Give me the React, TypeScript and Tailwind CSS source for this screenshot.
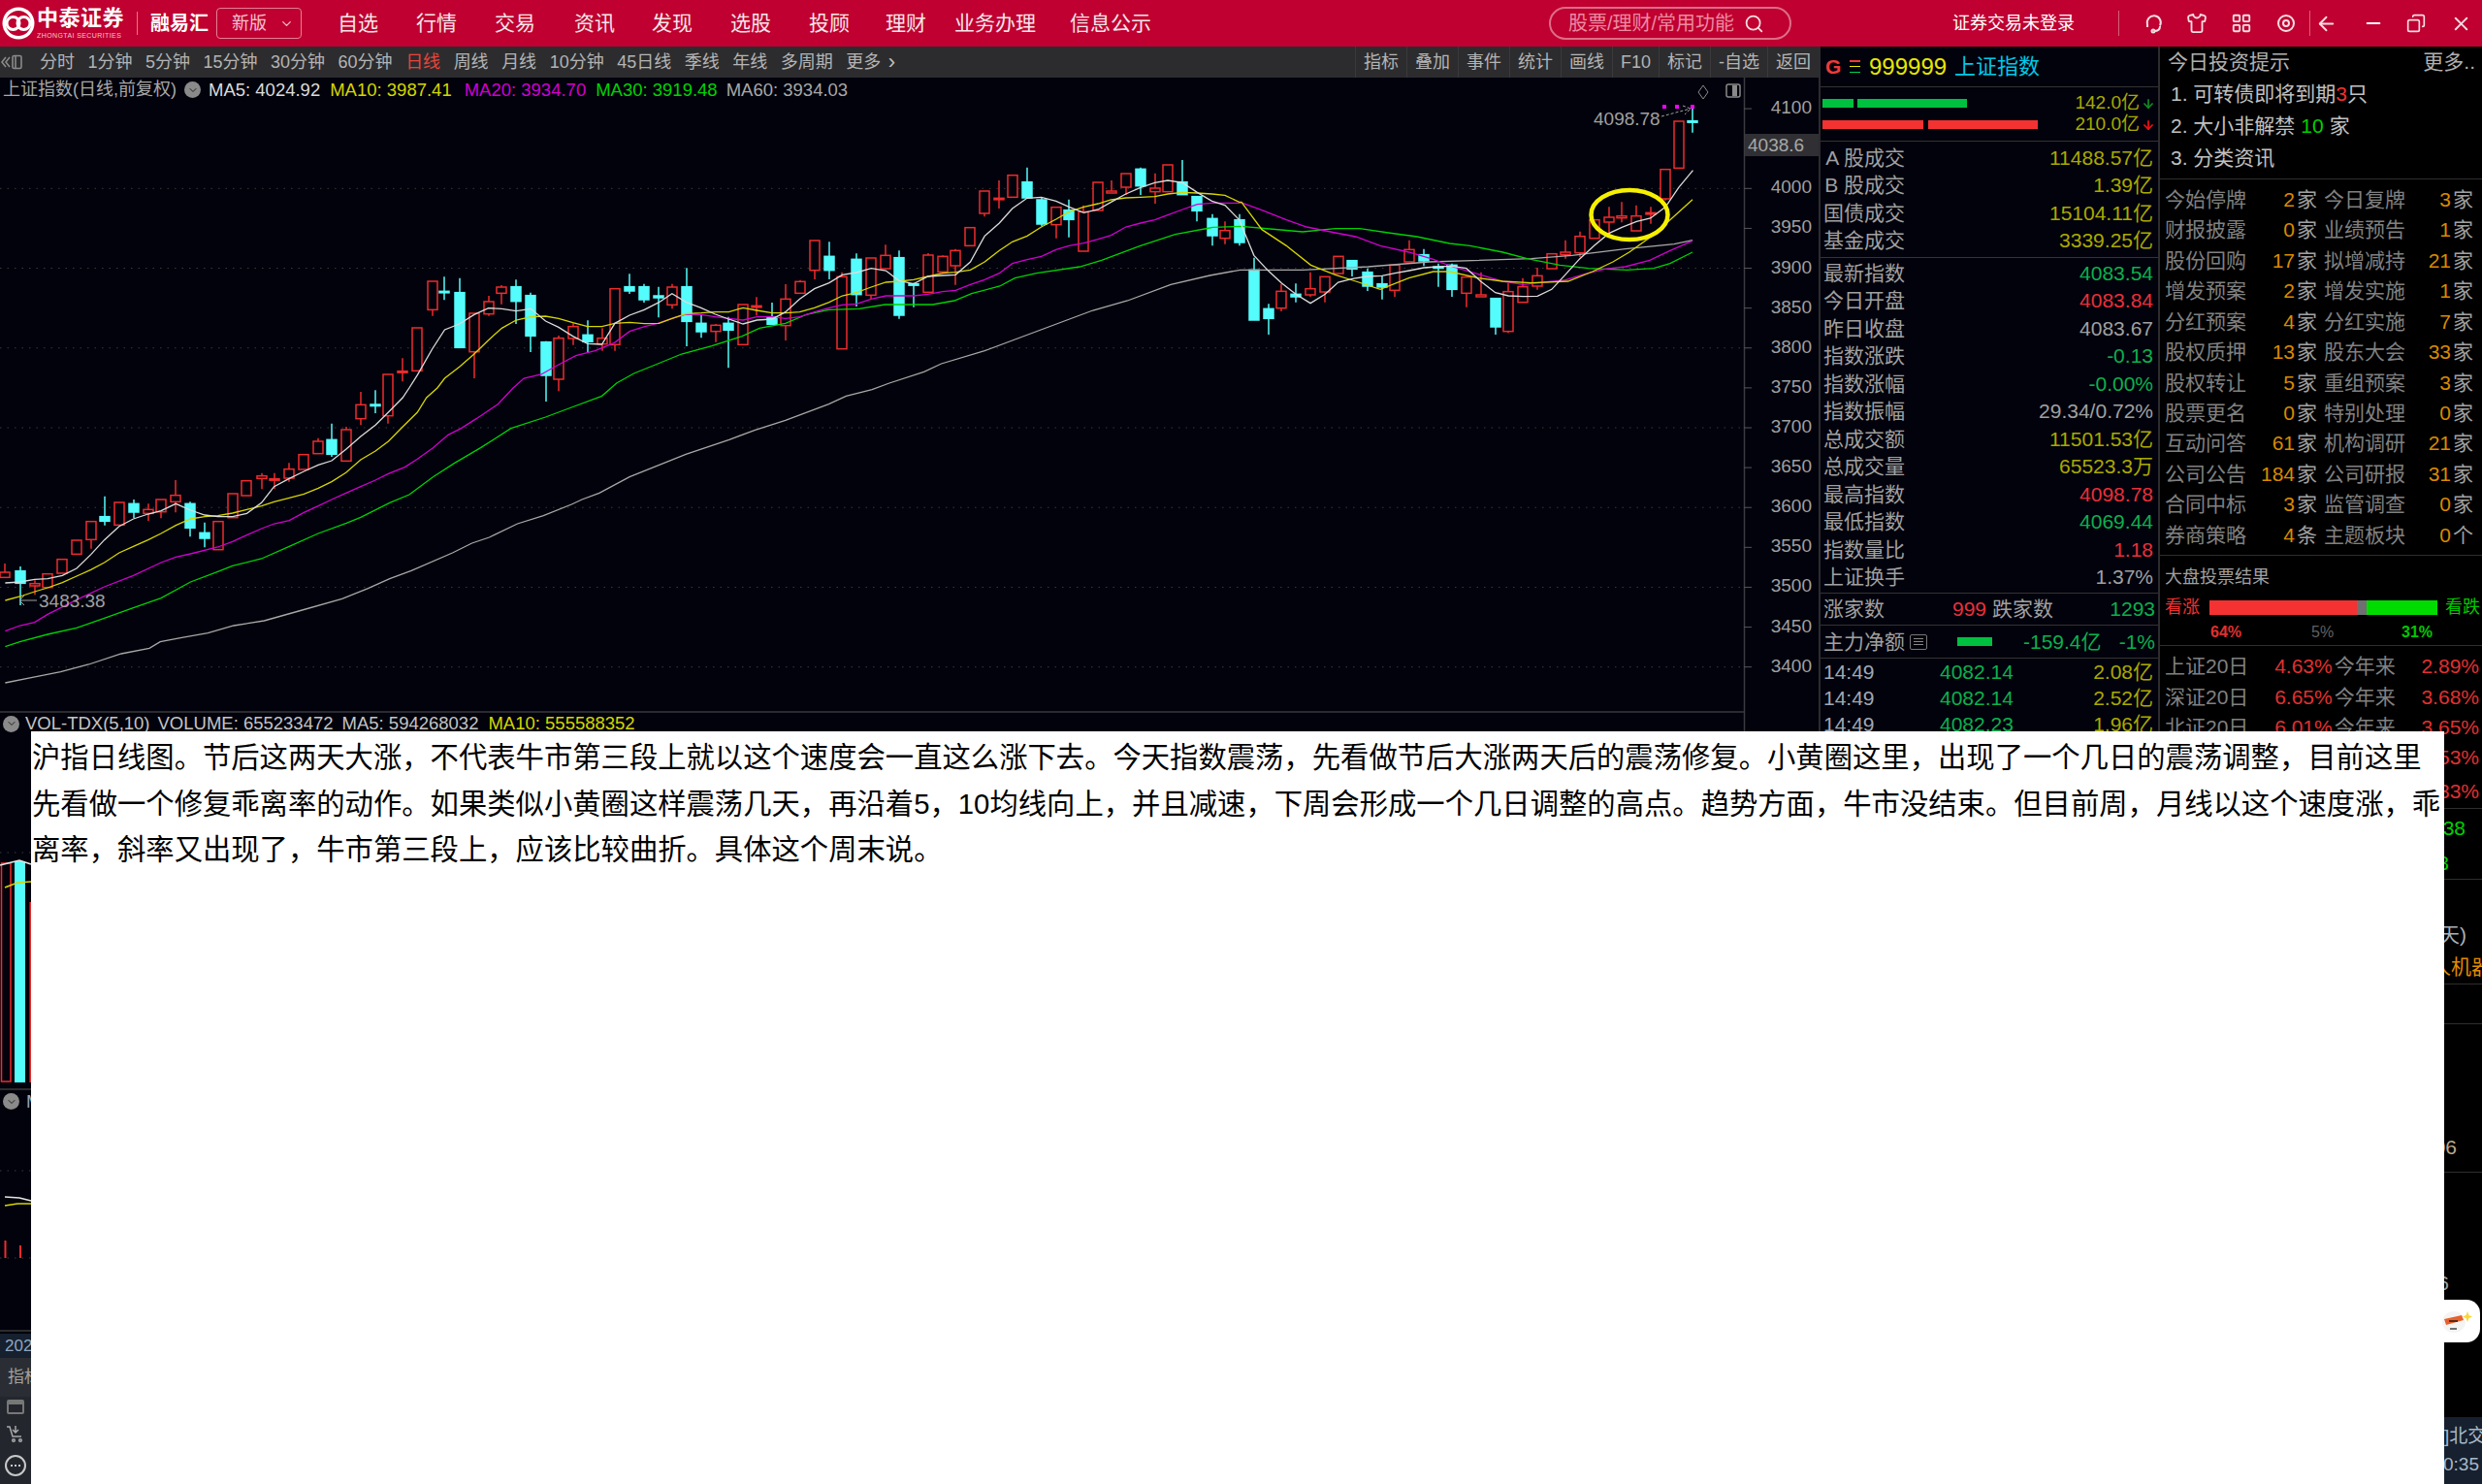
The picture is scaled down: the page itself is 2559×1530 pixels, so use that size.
import { ArrowDown, ArrowLeft, ChevronDown, Copy, LayoutGrid, Minus, Search, Shirt, X } from 'lucide-react'

type Pt = [number, number]

// 坐标都是从截图量出来的，分段抄的所以各段的换算不一样
const seg = (ox: number, oy: number, sx: number, nums: number[]): Pt[] => {
  const out: Pt[] = []
  for (let i = 0; i < nums.length; i += 2) out.push([ox + nums[i] / sx, oy + nums[i + 1] / 3])
  return out
}
const a = (n: number[]) => seg(0, 400, 2.24, n)
const b = (n: number[]) => seg(0, 130, 2.24, n)
const c = (n: number[]) => seg(600, 130, 2.24, n)
const d = (n: number[]) => seg(1200, 90, 2.376, n)

const MA5 = [
  ...a([12,603,46,600,80,592,110,590,144,580,177,558,210,515,241,470,275,428,308,405,342,390,372,380,406,358,440,378,473,393,503,398,537,398,570,388,604,355,633,305,668,280,702,258,735,238,766,225,799,190,833,150,867,115,897,75,930,30,945,0]),
  ...b([964,770,998,690,1027,630,1061,612,1095,583,1128,563,1159,565,1192,572,1226,565,1260,603,1290,622,1323,650,1357,673,1390,675,1420,610,1454,585,1488,568,1522,545,1552,518]),
  ...c([241,545,275,562,308,582,339,597,372,612,404,600,439,597,470,575,503,535,537,503,571,485,601,460,634,453,668,440,702,447,732,478,766,488,799,465,833,462,863,460,897,420,930,340,964,300,994,255,1028,223,1061,220,1095,232,1125,250,1159,268,1192,258,1222,235,1256,210,1290,190,1323,175,1353,168,1387,175,1421,205,1455,232,1485,245,1518,290,1552,400]),
  ...d([256,568,288,605,323,640,359,668,395,640,427,603,462,592,498,585,534,583,566,575,601,567,637,558,672,555,705,553,741,560,776,600,812,635,844,645,880,647,915,646,950,625,983,580,1019,530,1054,490,1090,452,1122,433,1158,415,1192,405,1229,370,1261,310,1296,257]),
]
const MA10 = [
  ...a([12,657,46,645,80,630,110,618,144,602,177,582,210,562,241,540,275,510,308,490,342,470,372,450,406,425,440,405,473,398,503,395,537,387,570,376,604,365,633,352,668,340,702,328,735,310,766,290,799,262,833,222,867,195,897,165,930,120,964,75,985,30,1010,0]),
  ...b([1027,780,1061,745,1095,705,1128,662,1159,625,1192,600,1226,590,1260,588,1290,595,1323,608,1357,620,1390,620,1420,610,1454,607,1488,611,1522,610,1552,595]),
  ...c([241,580,275,578,308,575,339,575,372,562,404,570,439,578,470,578,503,575,537,562,571,545,601,525,634,515,668,498,702,483,732,480,766,475,799,465,833,455,863,452,897,445,930,420,964,385,994,358,1028,340,1061,312,1095,288,1125,265,1159,250,1192,240,1222,228,1256,222,1290,220,1323,218,1353,210,1387,205,1421,207,1455,210,1485,214,1518,235]),
  ...d([190,355,240,440,300,490,360,550,420,580,470,600,530,625,600,590,660,570,700,570,770,590,830,600,900,605,990,600,1050,570,1100,540,1140,510,1190,465,1240,410,1295,347]),
]
const MA20 = [
  ...a([12,752,46,735,80,725,110,700,177,655,241,615,308,580,372,540,406,523,440,513,503,492,537,475,570,455,604,435,633,420,668,410,702,385,735,365,766,345,799,325,833,305,867,285,897,265,935,245,964,220,1000,185,1035,145,1065,125,1100,95,1150,50,1185,0]),
  ...b([1210,780,1250,768,1290,738,1330,710]),
  ...c([30,695,75,670,110,635,145,620,175,610,208,595,241,582,275,583,308,590,339,595,372,600,404,590,439,590,470,595,503,590,537,575,571,562,601,553,634,550,668,535,702,525,732,525,766,525,799,520,833,512,863,508,897,490,930,475,964,455,994,425,1028,413,1061,403,1095,382,1125,370,1159,362,1192,350,1222,338,1256,312,1290,300,1323,290,1353,275,1387,258,1421,242,1455,238,1485,238,1518,238]),
  ...d([190,357,240,380,300,410,350,432,420,450,470,462,530,490,600,510,660,532,700,552,770,578,830,600,880,610,930,603,980,597,1030,578,1080,562,1130,555,1190,535,1240,505,1295,475]),
]
const MA30 = [
  ...a([12,800,46,785,110,762,177,742,241,712,308,680,372,650,440,600,503,568,537,550,604,528,668,490,735,450,800,418,833,400,900,355,945,330,1000,275,1050,232,1110,185,1180,125,1260,90,1320,60,1390,25]),
  ...c([80,795,120,765,170,738,230,705,300,680,370,650,410,625,470,610,520,582,570,568,640,565,700,552,810,552,860,540,900,518,965,495,1000,470,1050,455,1150,435,1200,415,1290,370,1370,335,1450,315]),
  ...d([120,433,190,430,260,438,340,447,420,437,480,437,550,450,620,462,700,483,750,490,830,510,890,530,970,550,1040,560,1135,565,1200,560,1240,545,1295,510]),
]
const MA60 = [
  ...a([12,912,75,895,140,878,205,855,280,822,345,805,370,785,420,772,480,758,540,735,610,720,690,690,790,652,850,620,900,590,950,565,1045,510,1090,480,1130,462,1195,420,1255,395,1320,360]),
  ...c([0,1155,40,1135,110,1085,240,1015,340,970,400,940,470,910,570,860,610,835,670,815,710,795,790,760,830,735,930,695,1000,660,1060,630,1120,600,1180,570,1260,540,1360,490,1450,462,1520,445,1570,445]),
  ...d([340,565,500,555,650,540,900,530,1000,520,1130,500,1250,485,1295,473]),
]

// [x, 上影, 实体上, 实体下, 下影, 1=阳 0=阴]
type Raw = [number, number, number, number, number, number]
const C_A: Raw[] = [[12,543,570,586,586,1],[46,552,566,604,672,0],[80,595,605,612,640,1],[110,575,575,617,617,1],[144,530,530,573,573,1],[177,471,471,514,514,1],[210,413,413,469,497,1],[241,335,398,412,425,0],[275,354,354,424,424,1],[308,345,358,384,402,0],[342,358,376,388,411,1],[372,345,345,383,403,1],[406,285,332,352,385,1],[440,352,358,433,460,0],[473,416,448,465,493,0],[503,413,413,500,500,1],[537,327,327,401,401,1],[570,287,287,333,333,1],[604,263,272,280,313,1],[633,263,281,285,312,1],[668,232,251,279,290,1],[702,206,206,252,252,1],[735,155,165,203,203,1],[766,110,160,205,213,0],[799,120,129,226,226,1]]
const C_B: Raw[] = [[833,822,862,905,925,1],[867,817,861,865,888,0],[897,768,768,896,920,1],[930,718,758,762,790,1],[964,624,624,757,757,1],[998,480,480,568,587,1],[1027,466,511,514,538,0],[1061,470,515,685,685,0],[1095,579,579,698,780,1],[1128,525,543,581,587,1],[1159,492,498,517,551,1],[1192,475,497,542,612,0],[1226,515,524,649,699,0],[1260,665,668,771,852,0],[1290,648,656,783,820,1],[1323,610,620,657,677,1],[1357,601,646,667,700,0],[1390,625,656,674,695,1],[1420,503,503,676,695,1],[1454,457,497,510,519,0],[1488,488,497,537,546,0],[1522,497,525,531,592,0],[1552,488,498,553,565,1]]
const C_C: Raw[] = [[241,439,497,604,681,0],[275,585,610,636,655,0],[308,612,616,635,668,1],[339,590,610,631,748,0],[372,552,552,676,676,1],[404,529,556,560,586,1],[439,546,590,613,613,0],[470,489,535,617,663,1],[503,476,481,517,517,1],[537,354,354,446,474,1],[571,358,403,446,474,0],[601,452,466,689,689,1],[634,394,412,521,558,0],[668,408,408,523,535,1],[702,367,400,441,441,1],[732,385,407,585,596,0],[766,485,488,490,560,0],[799,393,399,514,514,1],[833,400,403,451,451,1],[863,380,385,432,491,1],[897,314,314,370,370,1],[930,201,201,270,280,1],[964,168,223,227,255,1],[994,152,152,220,220,1],[1028,128,173,222,222,0],[1061,222,228,303,310,0],[1095,251,251,305,347,1],[1125,227,260,289,344,0],[1159,245,265,387,387,1],[1192,174,174,261,261,1],[1222,168,201,207,207,1],[1256,147,147,189,213,1],[1290,128,133,185,213,0],[1323,146,192,203,240,1],[1353,120,120,203,203,1],[1387,105,173,212,212,0],[1421,218,218,262,295,0],[1455,272,286,339,370,0],[1485,295,323,347,365,1],[1518,272,290,360,370,0],[1552,407,445,600,600,0]]
const C_D: Raw[] = [[256,670,685,715,765,0],[288,608,631,683,693,1],[323,607,640,648,665,0],[359,572,623,642,648,1],[395,586,586,633,665,1],[427,523,523,576,576,1],[462,536,536,562,585,0],[498,560,572,615,630,0],[534,585,608,618,656,0],[566,550,550,628,648,1],[601,473,502,540,540,1],[637,500,518,537,553,0],[672,545,555,558,617,0],[705,545,550,625,648,0],[741,587,587,637,680,1],[776,572,642,648,648,1],[812,653,653,741,765,0],[844,605,632,755,760,1],[880,590,617,665,665,1],[915,558,583,615,626,1],[950,515,515,561,561,1],[983,473,510,518,530,1],[1019,446,461,512,525,1],[1054,410,410,467,467,1],[1090,370,402,417,450,1],[1122,355,398,404,418,1],[1158,365,398,444,444,1],[1192,370,388,390,422,1],[1229,254,254,345,350,1],[1261,105,105,250,250,1],[1296,62,104,106,140,0]]

const conv = (list: Raw[], ox: number, oy: number, sx: number) =>
  list.map(([x, w1, t, bt, w2, up]) => ({
    x: Math.round(ox + x / sx),
    w1: oy + w1 / 3,
    t: oy + t / 3,
    b: oy + bt / 3,
    w2: oy + w2 / 3,
    up: up === 1,
  }))
const CANDLES = [...conv(C_A, 0, 400, 2.24), ...conv(C_B, 0, 130, 2.24), ...conv(C_C, 600, 130, 2.24), ...conv(C_D, 1200, 90, 2.376)]

const priceY = (v: number) => 194.3 + (4000 - v) * 0.8223
const AXIS = [4100, 4000, 3950, 3900, 3850, 3800, 3750, 3700, 3650, 3600, 3550, 3500, 3450, 3400]
const GRID = [4000, 3900, 3800, 3700, 3600, 3500, 3400]

const LINES: { pts: Pt[]; color: string }[] = [
  { pts: MA60, color: '#a8a8a8' },
  { pts: MA30, color: '#00d200' },
  { pts: MA20, color: '#d000d0' },
  { pts: MA10, color: '#d6d600' },
  { pts: MA5, color: '#dcdcdc' },
]

const NAV = [
  { label: '自选', ml: 'ml-[37px]' },
  { label: '行情', ml: 'ml-[39px]' },
  { label: '交易', ml: 'ml-[39px]' },
  { label: '资讯', ml: 'ml-[40px]' },
  { label: '发现', ml: 'ml-[38px]' },
  { label: '选股', ml: 'ml-[39px]' },
  { label: '投顾', ml: 'ml-[39px]' },
  { label: '理财', ml: 'ml-[37px]' },
  { label: '业务办理', ml: 'ml-[29px]' },
  { label: '信息公示', ml: 'ml-[35px]' },
]
const PERIODS = ['分时', '1分钟', '5分钟', '15分钟', '30分钟', '60分钟', '日线', '周线', '月线', '10分钟', '45日线', '季线', '年线', '多周期', '更多']
const TOOLS = ['指标', '叠加', '事件', '统计', '画线', 'F10', '标记', '-自选', '返回']

const OLIVE = 'text-[#a9a900]'
const GREEN = 'text-[#0cb04e]'
const RED = 'text-[#e8303a]'
const GRAY = 'text-[#a0a0a0]'

const TRADE = [
  ['A 股成交', '11488.57亿', OLIVE],
  ['B 股成交', '1.39亿', OLIVE],
  ['国债成交', '15104.11亿', OLIVE],
  ['基金成交', '3339.25亿', OLIVE],
]
const QUOTE = [
  ['最新指数', '4083.54', GREEN],
  ['今日开盘', '4083.84', RED],
  ['昨日收盘', '4083.67', GRAY],
  ['指数涨跌', '-0.13', GREEN],
  ['指数涨幅', '-0.00%', GREEN],
  ['指数振幅', '29.34/0.72%', GRAY],
  ['总成交额', '11501.53亿', OLIVE],
  ['总成交量', '65523.3万', OLIVE],
  ['最高指数', '4098.78', RED],
  ['最低指数', '4069.44', GREEN],
  ['指数量比', '1.18', RED],
  ['上证换手', '1.37%', GRAY],
]
const TICKS = [
  ['14:49', '4082.14', '2.08亿'],
  ['14:49', '4082.14', '2.52亿'],
  ['14:49', '4082.23', '1.96亿'],
]
const NOTICE = [
  ['今始停牌', '2', '家', '今日复牌', '3', '家'],
  ['财报披露', '0', '家', '业绩预告', '1', '家'],
  ['股份回购', '17', '家', '拟增减持', '21', '家'],
  ['增发预案', '2', '家', '增发实施', '1', '家'],
  ['分红预案', '4', '家', '分红实施', '7', '家'],
  ['股权质押', '13', '家', '股东大会', '33', '家'],
  ['股权转让', '5', '家', '重组预案', '3', '家'],
  ['股票更名', '0', '家', '特别处理', '0', '家'],
  ['互动问答', '61', '家', '机构调研', '21', '家'],
  ['公司公告', '184', '家', '公司研报', '31', '家'],
  ['合同中标', '3', '家', '监管调查', '0', '家'],
  ['券商策略', '4', '条', '主题板块', '0', '个'],
]
const RETURNS = [
  ['上证20日', '4.63%', '今年来', '2.89%'],
  ['深证20日', '6.65%', '今年来', '3.68%'],
  ['北证20日', '6.01%', '今年来', '3.65%'],
]

function Logo() {
  return (
    <svg width="36" height="36" viewBox="0 0 36 36" className="ml-[1px] shrink-0">
      <circle cx="18" cy="18" r="16.5" fill="#fff" />
      <circle cx="18" cy="18" r="13" fill="#bf0030" />
      <circle cx="12.5" cy="18" r="6.5" fill="none" stroke="#fff" strokeWidth="3" />
      <circle cx="23.5" cy="18" r="6.5" fill="none" stroke="#fff" strokeWidth="3" />
    </svg>
  )
}

function TopBar() {
  return (
    <div className="flex h-[48px] shrink-0 items-center bg-[#bf0030] text-[21px] text-[#f6e6ea]">
      <Logo />
      <div className="ml-[1px] flex w-[92px] flex-col leading-none">
        <span className="text-[22px] font-bold tracking-[0.5px] text-white">中泰证券</span>
        <span className="mt-[3px] text-[7px] tracking-[0.4px] text-[#f3c9d3]">ZHONGTAI SECURITIES</span>
      </div>
      <div className="ml-[11px] h-[24px] w-px bg-[#e07a92]" />
      <span className="ml-[13px] text-[20px] font-bold text-white">融易汇</span>
      <div className="ml-[8px] flex h-[32px] w-[88px] items-center rounded-[4px] border border-[#e57f97] pl-[15px] text-[18px] text-[#f4c3cf]">
        新版
        <ChevronDown size={15} className="ml-[13px]" />
      </div>
      {NAV.map((n) => (
        <span key={n.label} className={n.ml}>
          {n.label}
        </span>
      ))}
      <div className="ml-[410px] flex h-[34px] w-[250px] items-center rounded-full border-2 border-[#dd6d88] pl-[18px] text-[20px] text-[#ec8aa1]">
        股票/理财/常用功能
        <Search size={21} className="ml-[10px] text-[#f8dde3]" />
      </div>
      <span className="ml-[166px] text-[18px] text-white">证券交易未登录</span>
      <div className="ml-[45px] h-[26px] w-px bg-[#d55f7c]" />
      <svg width="20" height="24" viewBox="0 0 20 24" fill="none" stroke="#f6dfe4" strokeWidth="2" className="ml-[26px]">
        <path d="M3 13a7 7 0 1 1 13 1.500M3 13v3M16 15c0 3-2 5-6 5" />
        <circle cx="9" cy="20" r="1.500" />
      </svg>
      <Shirt size={22} className="ml-[23px] text-[#f6dfe4]" />
      <LayoutGrid size={22} className="ml-[24px] text-[#f6dfe4]" />
      <svg width="20" height="20" viewBox="0 0 20 20" fill="none" stroke="#f6dfe4" strokeWidth="2" className="ml-[25px]">
        <circle cx="10" cy="10" r="8" />
        <circle cx="10" cy="10" r="3" />
      </svg>
      <div className="ml-[14px] h-[26px] w-px bg-[#d55f7c]" />
      <ArrowLeft size={23} className="ml-[5px] text-[#f6dfe4]" />
      <Minus size={22} className="ml-[26px] text-white" />
      <Copy size={20} className="ml-[23px] -scale-x-100 text-[#f6dfe4]" />
      <X size={23} className="ml-[25px] text-[#f6dfe4]" />
    </div>
  )
}

function Toolbar() {
  return (
    <div className="flex h-[32px] shrink-0 items-center bg-[#2c2c2e] text-[18px] text-[#b4b4b4]">
      <svg width="26" height="18" viewBox="0 0 26 18" fill="none" stroke="#8a8a8a" strokeWidth="1.6" className="shrink-0">
        <path d="M6 4 2 9l4 5M10 4 6 9l4 5" />
        <rect x="13" y="2.500" width="9" height="13" rx="1.500" />
        <path d="M16 3v12" />
      </svg>
      <div className="ml-[15px] flex items-center gap-[13.5px]">
        {PERIODS.map((p) => (
          <span key={p} className={p === '日线' ? 'text-[#e8443a]' : ''}>
            {p}
          </span>
        ))}
        <span className="-ml-[6px] text-[22px] leading-none text-[#c0c0c0]">›</span>
      </div>
      <div className="ml-auto flex items-center">
        {TOOLS.map((t) => (
          <span key={t} className="flex h-[32px] items-center border-l border-[#3a3a3c] px-[8px]">
            {t}
          </span>
        ))}
      </div>
    </div>
  )
}

function Chart() {
  return (
    <svg width="1875" height="1450" viewBox="0 80 1875 1450" className="block">
      {GRID.map((g) => (
        <line key={g} x1="0" x2="1798" y1={priceY(g)} y2={priceY(g)} stroke="#3a3a3a" strokeDasharray="1.5 6" />
      ))}
      <line x1="1798.5" x2="1798.5" y1="80" y2="760" stroke="#3a3a40" strokeWidth="1.5" />
      {AXIS.map((v) => (
        <g key={v}>
          <line x1="1798" x2="1806" y1={priceY(v)} y2={priceY(v)} stroke="#55555a" />
          <text x="1868" y={priceY(v) + 5} textAnchor="end" className="fill-[#a0a0a0] text-[19px]">
            {v}
          </text>
        </g>
      ))}
      <rect x="1799" y="138" width="76" height="23" fill="#303034" />
      <text x="1802" y="156" className="fill-[#a8a8a8] text-[19px]">
        4038.6
      </text>

      {CANDLES.map((k, i) => {
        const color = k.up ? '#ee2c2c' : '#54fcfc'
        const h = Math.max(k.b - k.t, 1.5)
        return (
          <g key={i}>
            <line x1={k.x} x2={k.x} y1={k.w1} y2={k.w2} stroke={color} strokeWidth="1.5" />
            <rect x={k.x - 5} y={k.t} width="10" height={h} fill={k.up ? '#02020c' : color} stroke={color} strokeWidth="1.5" />
          </g>
        )
      })}
      {LINES.map((l) => (
        <polyline key={l.color} points={l.pts.map((p) => p.join(',')).join(' ')} fill="none" stroke={l.color} strokeWidth="1.3" />
      ))}

      <ellipse cx="1680" cy="221.5" rx="39.5" ry="25.5" fill="none" stroke="#f6f000" strokeWidth="4.5" />
      <text x="1643" y="129" className="fill-[#a0a0a0] text-[19px]">
        4098.78
      </text>
      <path d="M1713 120 1743 112M1735 109l8 3-6 6" fill="none" stroke="#a0a0a0" strokeDasharray="3 2" />
      <rect x="1714" y="108" width="4" height="4" fill="#ff00ff" />
      <rect x="1727" y="108" width="4" height="4" fill="#ff00ff" />
      <rect x="1743" y="108" width="4" height="4" fill="#ff00ff" />
      <path d="M1756 88l5 7-5 7-5-7z" fill="none" stroke="#8a8a8a" />
      <rect x="1780" y="87" width="14" height="13" rx="2" fill="none" stroke="#8a8a8a" strokeWidth="1.5" />
      <rect x="1786" y="88" width="5" height="11" fill="#8a8a8a" />
      <path d="M38 619H20l5-5M20 619l5 5" fill="none" stroke="#a0a0a0" />
      <text x="40" y="626" className="fill-[#a0a0a0] text-[19px]">
        3483.38
      </text>

      <line x1="0" x2="1798" y1="734" y2="734" stroke="#3a3a3a" strokeWidth="1.5" />
      <text x="1822" y="772" className="fill-[#a0a0a0] text-[19px]">
        90000
      </text>

      {/* 白框左边漏出来的成交量和指标 */}
      <line x1="0" x2="32" y1="879" y2="879" stroke="#3a3a3a" strokeDasharray="1.5 6" />
      <rect x="1.5" y="890" width="9.5" height="225" fill="none" stroke="#ee2c2c" strokeWidth="1.5" />
      <rect x="15" y="888" width="11" height="228" fill="#54fcfc" />
      <rect x="30.5" y="930" width="1.5" height="186" fill="#ee2c2c" />
      <polyline points="0,892 8,890 20,887 32,891" fill="none" stroke="#e4e4e4" strokeWidth="1.6" />
      <polyline points="5,915 18,910 32,909" fill="none" stroke="#d6d600" strokeWidth="1.6" />
      <line x1="0" x2="32" y1="1123" y2="1123" stroke="#3a3a3a" strokeWidth="1.5" />
      <line x1="0" x2="32" y1="1207" y2="1207" stroke="#3a3a3a" strokeDasharray="1.5 6" />
      <polyline points="5,1234 20,1235 32,1238" fill="none" stroke="#e4e4e4" strokeWidth="1.6" />
      <polyline points="5,1243 18,1241 32,1241" fill="none" stroke="#d6d600" strokeWidth="1.6" />
      <line x1="0" x2="32" y1="1297" y2="1297" stroke="#3a3a3a" strokeDasharray="1.5 6" />
      <line x1="5.5" x2="5.5" y1="1279" y2="1297" stroke="#ee2c2c" strokeWidth="2" />
      <line x1="21" x2="21" y1="1284" y2="1297" stroke="#ee2c2c" strokeWidth="2" />
      <line x1="0" x2="32" y1="1372" y2="1372" stroke="#3a3a3a" strokeWidth="1.5" />
    </svg>
  )
}

function ChartLegend() {
  return (
    <>
      <div className="absolute left-[3px] top-[80px] flex h-[25px] items-center whitespace-nowrap text-[18.5px] text-[#a8a8a8]">
        <span className="text-[18px]">上证指数(日线,前复权)</span>
        <span className="ml-[8px] flex h-[17px] w-[17px] items-center justify-center rounded-full bg-[#8a8a8a]">
          <ChevronDown size={12} className="text-[#222]" />
        </span>
        <span className="ml-[8px] text-[#dcdcdc]">MA5: 4024.92</span>
        <span className="ml-[10px] text-[#d6d600]">MA10: 3987.41</span>
        <span className="ml-[13px] text-[#d000d0]">MA20: 3934.70</span>
        <span className="ml-[10px] text-[#00d200]">MA30: 3919.48</span>
        <span className="ml-[9px] text-[#a8a8a8]">MA60: 3934.03</span>
      </div>
      <div className="absolute left-[3px] top-[735px] flex h-[22px] items-center whitespace-nowrap text-[18.5px] text-[#c4c4c4]">
        <span className="flex h-[17px] w-[17px] items-center justify-center rounded-full bg-[#8a8a8a]">
          <ChevronDown size={12} className="text-[#222]" />
        </span>
        <span className="ml-[6px]">VOL-TDX(5,10)</span>
        <span className="ml-[8px]">VOLUME: 655233472</span>
        <span className="ml-[9px]">MA5: 594268032</span>
        <span className="ml-[10px] text-[#d6d600]">MA10: 555588352</span>
      </div>
      <div className="absolute left-[3px] top-[1127px] flex h-[17px] items-center whitespace-nowrap text-[18.5px] text-[#8fa6c0]">
        <span className="flex h-[17px] w-[17px] items-center justify-center rounded-full bg-[#8a8a8a]">
          <ChevronDown size={12} className="text-[#222]" />
        </span>
        <span className="ml-[7px]">MACD</span>
      </div>
      <div className="absolute bottom-0 left-0 flex h-[155px] w-[32px] flex-col overflow-hidden">
        <div className="flex h-[25px] items-center whitespace-nowrap bg-[#16202e] pl-[5px] text-[17px] text-[#8fa6c0]">2026</div>
        <div className="flex h-[40px] items-center whitespace-nowrap bg-[#2a2e34] pl-[8px] text-[17px] text-[#a0a0a0]">指标</div>
        <div className="flex flex-1 flex-col items-center bg-[#23272d] pt-[3px]">
          <div className="h-[15px] w-[18px] rounded-[2px] border-2 border-t-[5px] border-[#777]" />
          <svg width="20" height="20" viewBox="0 0 20 20" fill="none" stroke="#a8a8a8" strokeWidth="1.5" className="mt-[10px]">
            <path d="M1 3h3l3 10h9M10 2v6m-3-2 3 3 3-3" />
            <circle cx="8" cy="17" r="1.300" />
            <circle cx="15" cy="17" r="1.300" />
          </svg>
          <div className="mt-[12px] flex h-[22px] w-[22px] items-center justify-center gap-[2px] rounded-full border-2 border-[#c8c8c8]">
            <i className="h-[2px] w-[2px] bg-[#c8c8c8]" />
            <i className="h-[2px] w-[2px] bg-[#c8c8c8]" />
            <i className="h-[2px] w-[2px] bg-[#c8c8c8]" />
          </div>
        </div>
      </div>
    </>
  )
}

function KV({ label, value, color }: { label: string; value: string; color: string }) {
  return (
    <div className="flex h-[28.5px] items-center justify-between pl-[3px] pr-[5px]">
      <span className="w-[84px] text-right text-[#a0a0a0]">{label}</span>
      <span className={color}>{value}</span>
    </div>
  )
}

function QuotePanel() {
  return (
    <div className="flex w-[350px] shrink-0 flex-col overflow-hidden border-l-2 border-[#2c2c2e] text-[21px]">
      <div className="flex h-[42px] shrink-0 items-center border-b border-[#333] pl-[5px]">
        <span className="w-[14px] font-bold text-[#f03a3a]">G</span>
        <span className="ml-[11px] flex h-[13px] w-[11px] flex-col justify-between">
          <i className="h-[1.5px] bg-[#f03a3a]" />
          <i className="h-[1.5px] bg-[#e8e800]" />
          <i className="h-[1.5px] bg-[#00d050]" />
        </span>
        <span className="ml-[9px] text-[24px] text-[#e6e600]">999999</span>
        <span className="ml-[8px] text-[22px] text-[#00c8e8]">上证指数</span>
      </div>
      <div className="flex h-[56px] shrink-0 flex-col justify-center gap-[13px] border-b border-[#333] pl-[2px] pr-[3px]">
        <div className="flex h-[9px] items-center gap-[4px]">
          <i className="h-[9px] w-[32px] bg-[#00c040]" />
          <i className="h-[9px] w-[113px] bg-[#00c040]" />
          <span className="ml-auto text-[19px] text-[#a9a900]">142.0亿</span>
          <ArrowDown size={14} strokeWidth={3} className="-ml-[2px] text-[#108a20]" />
        </div>
        <div className="flex h-[9px] items-center gap-[5px]">
          <i className="h-[9px] w-[104px] bg-[#f43232]" />
          <i className="h-[9px] w-[113px] bg-[#f43232]" />
          <span className="ml-auto text-[19px] text-[#a9a900]">210.0亿</span>
          <ArrowDown size={14} strokeWidth={3} className="-ml-[3px] text-[#f01010]" />
        </div>
      </div>
      <div className="shrink-0 border-b border-[#333] pb-[3px] pt-[2px]">
        {TRADE.map(([l, v, col]) => (
          <KV key={l} label={l} value={v} color={col} />
        ))}
      </div>
      <div className="shrink-0 border-b border-[#333] pb-[2px] pt-[1px]">
        {QUOTE.map(([l, v, col]) => (
          <KV key={l} label={l} value={v} color={col} />
        ))}
      </div>
      <div className="flex h-[33px] shrink-0 items-center border-b border-[#333] pl-[3px] pr-[3px]">
        <span className="text-[#a0a0a0]">涨家数</span>
        <span className={`ml-[70px] ${RED}`}>999</span>
        <span className="ml-[6px] text-[#a0a0a0]">跌家数</span>
        <span className={`ml-auto ${GREEN}`}>1293</span>
      </div>
      <div className="flex h-[34px] shrink-0 items-center border-b border-[#333] pl-[3px] pr-[3px]">
        <span className="text-[#a0a0a0]">主力净额</span>
        <span className="ml-[5px] flex h-[16px] w-[18px] flex-col justify-center gap-[2px] rounded-[2px] border border-[#777] px-[3px]">
          <i className="h-px bg-[#888]" />
          <i className="h-px bg-[#888]" />
          <i className="h-px bg-[#888]" />
        </span>
        <i className="ml-[31px] h-[9px] w-[36px] bg-[#00c040]" />
        <span className={`ml-[32px] ${GREEN}`}>-159.4亿</span>
        <span className={`ml-auto ${GREEN}`}>-1%</span>
      </div>
      {TICKS.map(([t, p, v], i) => (
        <div key={i} className="flex h-[27px] shrink-0 items-center pl-[3px] pr-[5px]">
          <span className="w-[120px] text-[#a0a8b4]">{t}</span>
          <span className={GREEN}>{p}</span>
          <span className={`ml-auto ${OLIVE}`}>{v}</span>
        </div>
      ))}
    </div>
  )
}

function NoticePanel() {
  return (
    <div className="flex w-[334px] shrink-0 flex-col overflow-hidden border-l-2 border-[#2c2c2e] bg-black text-[21px] text-[#a0a0a0]">
      <div className="flex h-[32px] shrink-0 items-center justify-between pl-[8px] pr-[7px] text-[#b0b0b0]">
        <span>今日投资提示</span>
        <span>更多..</span>
      </div>
      <div className="flex h-[33px] shrink-0 items-center pl-[11px] text-[#c0c0c0]">
        1. 可转债即将到期<span className="text-[#f03030]">3</span>只
      </div>
      <div className="flex h-[33px] shrink-0 items-center pl-[11px] text-[#c0c0c0]">
        2. 大小非解禁<span className="mx-[6px] text-[#00d000]">10</span>家
      </div>
      <div className="flex h-[33px] shrink-0 items-center pl-[11px] text-[#c0c0c0]">3. 分类资讯</div>
      <div className="mt-[5px] shrink-0 border-t border-[#2e2e2e] pb-[5px] pt-[5px]">
        {NOTICE.map(([l1, v1, u1, l2, v2, u2]) => (
          <div key={l1} className="flex h-[31.45px] items-center pl-[5px]">
            <span className="w-[84px] text-[#808080]">{l1}</span>
            <span className="w-[50px] text-right text-[#d98a00]">{v1}</span>
            <span className="ml-[2px] w-[21px]">{u1}</span>
            <span className="ml-[7px] w-[84px] text-[#808080]">{l2}</span>
            <span className="w-[47px] text-right text-[#d98a00]">{v2}</span>
            <span className="ml-[2px] w-[21px]">{u2}</span>
          </div>
        ))}
      </div>
      <div className="flex h-[43px] shrink-0 items-center border-t border-[#2e2e2e] pl-[5px] pt-[2px] text-[18px]">大盘投票结果</div>
      <div className="flex h-[22px] shrink-0 items-center pl-[5px] text-[18px]">
        <span className="text-[#f03030]">看涨</span>
        <div className="ml-[10px] flex h-[15px] w-[235px]">
          <i className="w-[152px] bg-[#f43232]" />
          <i className="w-[10px] bg-[#707070]" />
          <i className="flex-1 bg-[#00dc00]" />
        </div>
        <span className="ml-[8px] text-[#00c800]">看跌</span>
      </div>
      <div className="mb-[5px] flex h-[29px] shrink-0 items-center border-b border-[#2e2e2e] pt-[2px] text-[16px] font-bold">
        <span className="ml-[52px] w-[104px] text-[#e03030]">64%</span>
        <span className="w-[93px] font-normal text-[#606060]">5%</span>
        <span className="text-[#00c800]">31%</span>
      </div>
      {RETURNS.map(([l, v, m, y]) => (
        <div key={l} className="flex h-[31.4px] shrink-0 items-center pl-[5px] pr-[3px]">
          <span className="text-[#808080]">{l}</span>
          <span className="ml-auto text-[#e03030]">{v}</span>
          <span className="ml-[2px] w-[63px] text-[#808080]">{m}</span>
          <span className="ml-auto text-[#e03030]">{y}</span>
        </div>
      ))}
      {/* 下面只有白框右边这一点点露出来 */}
      <div className="flex h-[31.4px] shrink-0 items-center justify-end pr-[3px] text-[#e03030]">53%</div>
      <div className="flex h-[37px] shrink-0 items-start justify-end border-b border-[#2e2e2e] pr-[3px] pt-[3px] text-[#e03030]">33%</div>
      <div className="flex h-[40px] shrink-0 items-center justify-end pr-[17px] text-[#00d000]">38</div>
      <div className="flex h-[33px] shrink-0 items-center justify-end border-b border-[#2e2e2e] pr-[34px] text-[#00d000]">8</div>
      <div className="h-[41px] shrink-0" />
      <div className="flex h-[32px] shrink-0 items-center justify-end pr-[16px] text-[#a8b0b8]">天)</div>
      <div className="flex h-[35px] shrink-0 items-center overflow-hidden whitespace-nowrap border-b border-[#2e2e2e] pl-[279px] text-[#e08a00]">人机器人</div>
      <div className="h-[41px] shrink-0 border-b border-[#2e2e2e]" />
      <div className="flex h-[153px] shrink-0 items-end justify-end border-b border-[#2e2e2e] pb-[9px] pr-[26px] text-[#b8a890]">06</div>
      <div className="flex h-[130px] shrink-0 items-end justify-end pr-[34px] text-[#a0a0a0]">16</div>
      <div className="mt-auto flex h-[69px] shrink-0 flex-col justify-between bg-[#16202e] pb-[6px] pt-[6px] text-[19px] text-[#a8b8c8]">
        <span className="whitespace-nowrap pl-[293px]">]北交</span>
        <span className="self-end pr-[3px]">0:35</span>
      </div>
    </div>
  )
}

function Mascot() {
  return (
    <div className="absolute right-[2px] top-[1340px] flex h-[44px] w-[40px] items-center rounded-r-[14px] bg-white">
      <svg width="32" height="30" viewBox="0 0 32 30">
        <ellipse cx="13" cy="16" rx="12" ry="11" fill="#f4f4f4" />
        <path d="M3 13 21 9l2 5-18 5z" fill="#e8602c" />
        <path d="M8 15h9" stroke="#5a2a1a" strokeWidth="2" />
        <path d="M9 23h7" stroke="#444" strokeWidth="1.5" />
        <path d="m27 5 1.5 4 3.5 1.500-3.500 1.500-1.500 4-1.500-4-3.500-1.500 3.500-1.500z" fill="#f8d838" />
      </svg>
    </div>
  )
}

export default function App() {
  return (
    <div className="relative flex h-[1530px] w-[2559px] flex-col overflow-hidden bg-[#02020c] [font-family:'Liberation_Sans','Noto_Sans_CJK_SC',sans-serif]">
      <TopBar />
      <div className="flex min-h-0 flex-1">
        <div className="flex w-[1875px] shrink-0 flex-col">
          <Toolbar />
          <Chart />
        </div>
        <QuotePanel />
        <NoticePanel />
      </div>
      <ChartLegend />
      {/* 盖在行情软件上的文字框 */}
      <div className="absolute left-[32px] top-[754px] h-[776px] w-[2488px] bg-white pl-[1px] pt-[3px] text-[29.33px] leading-[47.5px] text-black">
        沪指日线图。节后这两天大涨，不代表牛市第三段上就以这个速度会一直这么涨下去。今天指数震荡，先看做节后大涨两天后的震荡修复。小黄圈这里，出现了一个几日的震荡调整，目前这里先看做一个修复乖离率的动作。如果类似小黄圈这样震荡几天，再沿着5，10均线向上，并且减速，下周会形成一个几日调整的高点。趋势方面，牛市没结束。但目前周，月线以这个速度涨，乖离率，斜率又出现了，牛市第三段上，应该比较曲折。具体这个周末说。
      </div>
      <Mascot />
    </div>
  )
}
